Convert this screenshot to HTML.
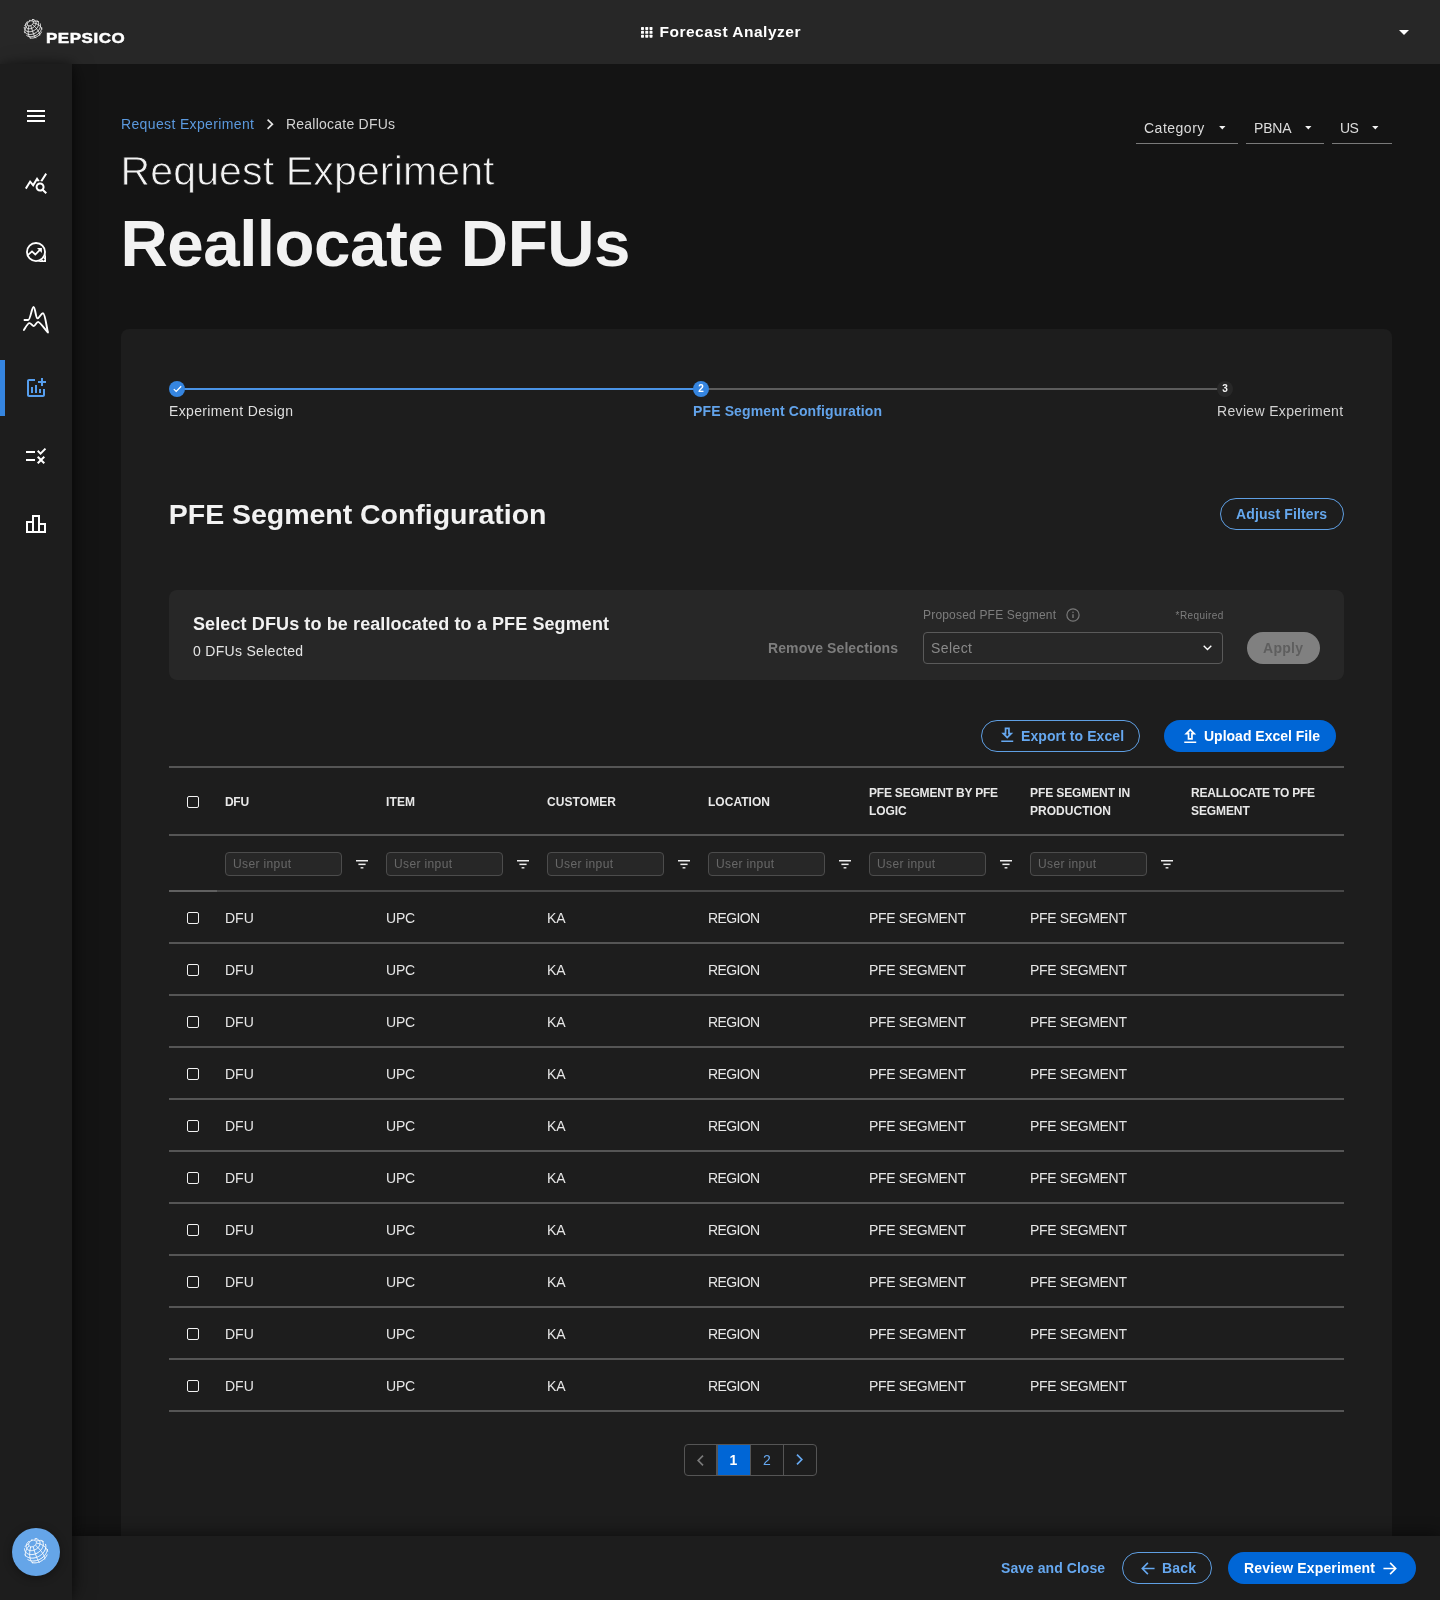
<!DOCTYPE html>
<html lang="en">
<head>
<meta charset="utf-8">
<title>Forecast Analyzer - Reallocate DFUs</title>
<style>
*{box-sizing:border-box;margin:0;padding:0}
html,body{width:1440px;height:1600px;overflow:hidden;background:#141414;color:#f2f2f2;
 font-family:"Liberation Sans",sans-serif}
.abs{position:absolute;white-space:nowrap}
#topbar{position:absolute;left:0;top:0;width:1440px;height:64px;background:#272727}
#sidebar{position:absolute;left:0;top:64px;width:72px;height:1536px;background:#1d1d1d;
 box-shadow:6px 0 22px -6px rgba(0,0,0,.55),0 0 10px rgba(0,0,0,.4)}
#main{position:absolute;left:72px;top:64px;width:1368px;height:1536px;background:#141414}
#card{position:absolute;left:121px;top:329px;width:1271px;height:1300px;background:#1d1d1d;border-radius:8px}
#footer{position:absolute;left:72px;top:1536px;width:1368px;height:64px;background:#1d1d1d;
 box-shadow:0 -3px 14px rgba(0,0,0,.45)}
#content,#footc,#sidec,#topc{position:absolute;left:0;top:0;width:1440px;height:1600px;will-change:transform;pointer-events:none}
svg{position:absolute;overflow:visible}
</style>
</head>
<body>
<div id="main"></div>
<div id="card"></div>
<div id="content">
<div class="abs" style="left:121px;top:114px;font-size:14px;line-height:20px;color:#5b99de;letter-spacing:0.36px;">Request Experiment</div>
<svg style="left:266.80px;top:118.90px" width="6.2" height="10.4" viewBox="0 0 6.2 10.4" fill="none" stroke="#e4e4e4" stroke-width="1.7"><path d="M0.600 0.600L5.40 5.20L0.600 9.80"/></svg>
<div class="abs" style="left:286px;top:114px;font-size:14px;line-height:20px;color:#d2d2d2;letter-spacing:0.23px;">Reallocate DFUs</div>
<div class="abs" style="left:120.5px;top:147px;font-size:41px;line-height:48px;color:#f2f2f2;letter-spacing:0.15px;-webkit-text-stroke:0.85px #141414;">Request Experiment</div>
<div class="abs" style="left:120.5px;top:208px;font-size:65.5px;line-height:72px;color:#f2f2f2;font-weight:700;letter-spacing:-0.5px;">Reallocate DFUs</div>
<div class="abs" style="left:1144px;top:118px;font-size:14px;line-height:20px;color:#dcdcdc;letter-spacing:0.5px;">Category</div>
<svg style="left:1218.5px;top:126.3px" width="6.600" height="3.600" viewBox="0 0 7 4"><path d="M0 0h7L3.500 4z" fill="#f2f2f2"/></svg>
<div class="abs" style="left:1136px;top:142.6px;width:102px;height:1px;background:#7a7a7a"></div>
<div class="abs" style="left:1254px;top:118px;font-size:14px;line-height:20px;color:#dcdcdc;letter-spacing:-0.2px;">PBNA</div>
<svg style="left:1304.5px;top:126.3px" width="6.600" height="3.600" viewBox="0 0 7 4"><path d="M0 0h7L3.500 4z" fill="#f2f2f2"/></svg>
<div class="abs" style="left:1246px;top:142.6px;width:78px;height:1px;background:#7a7a7a"></div>
<div class="abs" style="left:1340px;top:118px;font-size:14px;line-height:20px;color:#dcdcdc;letter-spacing:-0.6px;">US</div>
<svg style="left:1372.3px;top:126.3px" width="6.600" height="3.600" viewBox="0 0 7 4"><path d="M0 0h7L3.500 4z" fill="#f2f2f2"/></svg>
<div class="abs" style="left:1332px;top:142.6px;width:60px;height:1px;background:#7a7a7a"></div>
<div class="abs" style="left:177px;top:388px;width:524px;height:2px;background:#4a93e6"></div>
<div class="abs" style="left:701px;top:388px;width:517px;height:2px;background:#5c5c5c"></div>
<div class="abs" style="left:169px;top:381px;width:16px;height:16px;background:#3585e0;border-radius:50%"></div>
<svg style="left:172.5px;top:385px" width="9" height="8" viewBox="0 0 9 8" fill="none" stroke="#fff" stroke-width="1.25"><path d="M0.800 4.100L3.200 6.400L8.200 1.200"/></svg>
<div class="abs" style="left:693px;top:381px;width:16px;height:16px;background:#3585e0;border-radius:50%"></div>
<div class="abs" style="left:693px;top:381px;font-size:10px;line-height:16px;color:#fff;font-weight:700;width:16px;text-align:center;">2</div>
<div class="abs" style="left:1217px;top:381px;width:16px;height:16px;background:#282828;border-radius:50%"></div>
<div class="abs" style="left:1217px;top:381px;font-size:10px;line-height:16px;color:#f2f2f2;font-weight:700;width:16px;text-align:center;">3</div>
<div class="abs" style="left:169px;top:401px;font-size:14px;line-height:20px;color:#dedede;letter-spacing:0.36px;">Experiment Design</div>
<div class="abs" style="left:693px;top:401px;font-size:14px;line-height:20px;color:#62a3ea;font-weight:700;letter-spacing:0.13px;">PFE Segment Configuration</div>
<div class="abs" style="left:1217px;top:401px;font-size:14px;line-height:20px;color:#d2d2d2;letter-spacing:0.34px;">Review Experiment</div>
<div class="abs" style="left:168.8px;top:496px;font-size:28.5px;line-height:36px;color:#f2f2f2;font-weight:700;letter-spacing:-0.03px;">PFE Segment Configuration</div>
<div class="abs" style="left:1220px;top:498px;width:124px;height:32px;border:1px solid #5f9fe3;border-radius:16px"></div>
<div class="abs" style="left:1236px;top:504px;font-size:14px;line-height:20px;color:#66a8ee;font-weight:700;letter-spacing:0.12px;">Adjust Filters</div>
<div class="abs" style="left:169px;top:590px;width:1175px;height:90px;background:#272727;border-radius:8px"></div>
<div class="abs" style="left:193px;top:612px;font-size:18px;line-height:24px;color:#f2f2f2;font-weight:700;letter-spacing:0.11px;">Select DFUs to be reallocated to a PFE Segment</div>
<div class="abs" style="left:193px;top:641px;font-size:14px;line-height:20px;color:#e4e4e4;letter-spacing:0.3px;">0 DFUs Selected</div>
<div class="abs" style="left:768px;top:638px;font-size:14px;line-height:20px;color:#7d7d7d;font-weight:700;letter-spacing:0.1px;">Remove Selections</div>
<div class="abs" style="left:923px;top:607px;font-size:12px;line-height:16px;color:#7d7d7d;letter-spacing:0.19px;">Proposed PFE Segment</div>
<svg style="left:1066px;top:608px" width="14" height="14" viewBox="0 0 14 14" fill="none" stroke="#787878" stroke-width="1.2"><circle cx="7" cy="7" r="6.1"/><path d="M7 6.2v3.8" stroke-width="1.4"/><circle cx="7" cy="4.200" r="0.800" fill="#787878" stroke="none"/></svg>
<div class="abs" style="left:1175.6px;top:609px;font-size:10px;line-height:14px;color:#7d7d7d;letter-spacing:0.4px;">*Required</div>
<div class="abs" style="left:923px;top:632px;width:300px;height:32px;border:1px solid #5a5a5a;border-radius:4px"></div>
<div class="abs" style="left:931px;top:638px;font-size:14px;line-height:20px;color:#8a8a8a;letter-spacing:0.42px;">Select</div>
<svg style="left:1203px;top:645px" width="9" height="6" viewBox="0 0 9 6" fill="none" stroke="#fff" stroke-width="1.350"><path d="M0.7 0.8L4.5 4.6L8.3 0.8"/></svg>
<div class="abs" style="left:1247px;top:632px;width:73px;height:32px;background:#808080;border-radius:16px"></div>
<div class="abs" style="left:1263px;top:638px;font-size:14px;line-height:20px;color:#5e5e5e;font-weight:700;letter-spacing:0.28px;">Apply</div>
<div class="abs" style="left:981px;top:720px;width:159px;height:32px;border:1px solid #5f9fe3;border-radius:16px"></div>
<svg style="left:996.6px;top:725.4px" width="20.5" height="20.5" viewBox="0 0 24 24"><path d="M19 9h-4V3H9v6H5l7 7 7-7zm-8 2V5h2v6h1.17L12 13.17 9.83 11H11zm-6 7h14v2H5z" fill="#66a8f0"/></svg>
<div class="abs" style="left:1021px;top:726px;font-size:14px;line-height:20px;color:#66a8f0;font-weight:700;letter-spacing:0.08px;">Export to Excel</div>
<div class="abs" style="left:1164px;top:720px;width:172px;height:32px;background:#0066d6;border-radius:16px"></div>
<svg style="left:1179.7px;top:726.1px" width="20.5" height="20.5" viewBox="0 0 24 24"><path d="M9 16h6v-6h4l-7-7-7 7h4v6zm3-10.17L14.17 8H13v6h-2V8H9.83L12 5.83zM5 18h14v2H5z" fill="#fff"/></svg>
<div class="abs" style="left:1204px;top:726px;font-size:14px;line-height:20px;color:#ffffff;font-weight:700;">Upload Excel File</div>
<div class="abs" style="left:169px;top:766px;width:1175px;height:2px;background:#555555"></div>
<div class="abs" style="left:169px;top:834px;width:1175px;height:2px;background:#555555"></div>
<div class="abs" style="left:169px;top:890px;width:1175px;height:2px;background:#474747"></div>
<div class="abs" style="left:169px;top:890px;width:48px;height:2px;background:#606060"></div>
<div class="abs" style="left:169px;top:942px;width:1175px;height:2px;background:#555555"></div>
<div class="abs" style="left:169px;top:994px;width:1175px;height:2px;background:#555555"></div>
<div class="abs" style="left:169px;top:1046px;width:1175px;height:2px;background:#555555"></div>
<div class="abs" style="left:169px;top:1098px;width:1175px;height:2px;background:#555555"></div>
<div class="abs" style="left:169px;top:1150px;width:1175px;height:2px;background:#555555"></div>
<div class="abs" style="left:169px;top:1202px;width:1175px;height:2px;background:#555555"></div>
<div class="abs" style="left:169px;top:1254px;width:1175px;height:2px;background:#555555"></div>
<div class="abs" style="left:169px;top:1306px;width:1175px;height:2px;background:#555555"></div>
<div class="abs" style="left:169px;top:1358px;width:1175px;height:2px;background:#555555"></div>
<div class="abs" style="left:169px;top:1410px;width:1175px;height:2px;background:#555555"></div>
<div class="abs" style="left:186.75px;top:795.75px;width:12.5px;height:12.5px;border:1.25px solid #f2f2f2;border-radius:2px"></div>
<div class="abs" style="left:225px;top:793px;font-size:12px;line-height:18px;color:#e8e8e8;font-weight:700;letter-spacing:-0.3px;">DFU</div>
<div class="abs" style="left:386px;top:793px;font-size:12px;line-height:18px;color:#e8e8e8;font-weight:700;letter-spacing:0.15px;">ITEM</div>
<div class="abs" style="left:547px;top:793px;font-size:12px;line-height:18px;color:#e8e8e8;font-weight:700;letter-spacing:0.08px;">CUSTOMER</div>
<div class="abs" style="left:708px;top:793px;font-size:12px;line-height:18px;color:#e8e8e8;font-weight:700;letter-spacing:0.03px;">LOCATION</div>
<div class="abs" style="left:869px;top:784px;font-size:12px;line-height:18px;color:#e8e8e8;font-weight:700;letter-spacing:-0.2px;">PFE SEGMENT BY PFE</div>
<div class="abs" style="left:869px;top:802px;font-size:12px;line-height:18px;color:#e8e8e8;font-weight:700;letter-spacing:-0.1px;">LOGIC</div>
<div class="abs" style="left:1030px;top:784px;font-size:12px;line-height:18px;color:#e8e8e8;font-weight:700;letter-spacing:-0.1px;">PFE SEGMENT IN</div>
<div class="abs" style="left:1030px;top:802px;font-size:12px;line-height:18px;color:#e8e8e8;font-weight:700;letter-spacing:0.04px;">PRODUCTION</div>
<div class="abs" style="left:1191px;top:784px;font-size:12px;line-height:18px;color:#e8e8e8;font-weight:700;letter-spacing:-0.22px;">REALLOCATE TO PFE</div>
<div class="abs" style="left:1191px;top:802px;font-size:12px;line-height:18px;color:#e8e8e8;font-weight:700;letter-spacing:-0.1px;">SEGMENT</div>
<div class="abs" style="left:225px;top:852px;width:117px;height:24px;background:#272727;border:1px solid #4c4c4c;border-radius:4px"></div>
<div class="abs" style="left:233px;top:856px;font-size:12px;line-height:16px;color:#686868;letter-spacing:0.37px;">User input</div>
<svg style="left:356px;top:859.6px" width="12" height="9" viewBox="0 0 12 9" fill="#ededed"><rect x="0" y="0" width="12" height="1.5"/><rect x="2.4" y="3.6" width="7.2" height="1.5"/><rect x="4.6" y="7.1" width="2.8" height="1.4"/></svg>
<div class="abs" style="left:386px;top:852px;width:117px;height:24px;background:#272727;border:1px solid #4c4c4c;border-radius:4px"></div>
<div class="abs" style="left:394px;top:856px;font-size:12px;line-height:16px;color:#686868;letter-spacing:0.37px;">User input</div>
<svg style="left:517px;top:859.6px" width="12" height="9" viewBox="0 0 12 9" fill="#ededed"><rect x="0" y="0" width="12" height="1.5"/><rect x="2.4" y="3.6" width="7.2" height="1.5"/><rect x="4.6" y="7.1" width="2.8" height="1.4"/></svg>
<div class="abs" style="left:547px;top:852px;width:117px;height:24px;background:#272727;border:1px solid #4c4c4c;border-radius:4px"></div>
<div class="abs" style="left:555px;top:856px;font-size:12px;line-height:16px;color:#686868;letter-spacing:0.37px;">User input</div>
<svg style="left:678px;top:859.6px" width="12" height="9" viewBox="0 0 12 9" fill="#ededed"><rect x="0" y="0" width="12" height="1.5"/><rect x="2.4" y="3.6" width="7.2" height="1.5"/><rect x="4.6" y="7.1" width="2.8" height="1.4"/></svg>
<div class="abs" style="left:708px;top:852px;width:117px;height:24px;background:#272727;border:1px solid #4c4c4c;border-radius:4px"></div>
<div class="abs" style="left:716px;top:856px;font-size:12px;line-height:16px;color:#686868;letter-spacing:0.37px;">User input</div>
<svg style="left:839px;top:859.6px" width="12" height="9" viewBox="0 0 12 9" fill="#ededed"><rect x="0" y="0" width="12" height="1.5"/><rect x="2.4" y="3.6" width="7.2" height="1.5"/><rect x="4.6" y="7.1" width="2.8" height="1.4"/></svg>
<div class="abs" style="left:869px;top:852px;width:117px;height:24px;background:#272727;border:1px solid #4c4c4c;border-radius:4px"></div>
<div class="abs" style="left:877px;top:856px;font-size:12px;line-height:16px;color:#686868;letter-spacing:0.37px;">User input</div>
<svg style="left:1000px;top:859.6px" width="12" height="9" viewBox="0 0 12 9" fill="#ededed"><rect x="0" y="0" width="12" height="1.5"/><rect x="2.4" y="3.6" width="7.2" height="1.5"/><rect x="4.6" y="7.1" width="2.8" height="1.4"/></svg>
<div class="abs" style="left:1030px;top:852px;width:117px;height:24px;background:#272727;border:1px solid #4c4c4c;border-radius:4px"></div>
<div class="abs" style="left:1038px;top:856px;font-size:12px;line-height:16px;color:#686868;letter-spacing:0.37px;">User input</div>
<svg style="left:1161px;top:859.6px" width="12" height="9" viewBox="0 0 12 9" fill="#ededed"><rect x="0" y="0" width="12" height="1.5"/><rect x="2.4" y="3.6" width="7.2" height="1.5"/><rect x="4.6" y="7.1" width="2.8" height="1.4"/></svg>
<div class="abs" style="left:186.75px;top:911.95px;width:12.5px;height:12.5px;border:1.25px solid #f2f2f2;border-radius:2px"></div>
<div class="abs" style="left:225px;top:908px;font-size:14px;line-height:20px;color:#e6e6e6;">DFU</div>
<div class="abs" style="left:386px;top:908px;font-size:14px;line-height:20px;color:#e6e6e6;letter-spacing:-0.2px;">UPC</div>
<div class="abs" style="left:547px;top:908px;font-size:14px;line-height:20px;color:#e6e6e6;letter-spacing:-0.2px;">KA</div>
<div class="abs" style="left:708px;top:908px;font-size:14px;line-height:20px;color:#e6e6e6;letter-spacing:-0.6px;">REGION</div>
<div class="abs" style="left:869px;top:908px;font-size:14px;line-height:20px;color:#e6e6e6;letter-spacing:-0.34px;">PFE SEGMENT</div>
<div class="abs" style="left:1030px;top:908px;font-size:14px;line-height:20px;color:#e6e6e6;letter-spacing:-0.34px;">PFE SEGMENT</div>
<div class="abs" style="left:186.75px;top:963.95px;width:12.5px;height:12.5px;border:1.25px solid #f2f2f2;border-radius:2px"></div>
<div class="abs" style="left:225px;top:960px;font-size:14px;line-height:20px;color:#e6e6e6;">DFU</div>
<div class="abs" style="left:386px;top:960px;font-size:14px;line-height:20px;color:#e6e6e6;letter-spacing:-0.2px;">UPC</div>
<div class="abs" style="left:547px;top:960px;font-size:14px;line-height:20px;color:#e6e6e6;letter-spacing:-0.2px;">KA</div>
<div class="abs" style="left:708px;top:960px;font-size:14px;line-height:20px;color:#e6e6e6;letter-spacing:-0.6px;">REGION</div>
<div class="abs" style="left:869px;top:960px;font-size:14px;line-height:20px;color:#e6e6e6;letter-spacing:-0.34px;">PFE SEGMENT</div>
<div class="abs" style="left:1030px;top:960px;font-size:14px;line-height:20px;color:#e6e6e6;letter-spacing:-0.34px;">PFE SEGMENT</div>
<div class="abs" style="left:186.75px;top:1015.95px;width:12.5px;height:12.5px;border:1.25px solid #f2f2f2;border-radius:2px"></div>
<div class="abs" style="left:225px;top:1012px;font-size:14px;line-height:20px;color:#e6e6e6;">DFU</div>
<div class="abs" style="left:386px;top:1012px;font-size:14px;line-height:20px;color:#e6e6e6;letter-spacing:-0.2px;">UPC</div>
<div class="abs" style="left:547px;top:1012px;font-size:14px;line-height:20px;color:#e6e6e6;letter-spacing:-0.2px;">KA</div>
<div class="abs" style="left:708px;top:1012px;font-size:14px;line-height:20px;color:#e6e6e6;letter-spacing:-0.6px;">REGION</div>
<div class="abs" style="left:869px;top:1012px;font-size:14px;line-height:20px;color:#e6e6e6;letter-spacing:-0.34px;">PFE SEGMENT</div>
<div class="abs" style="left:1030px;top:1012px;font-size:14px;line-height:20px;color:#e6e6e6;letter-spacing:-0.34px;">PFE SEGMENT</div>
<div class="abs" style="left:186.75px;top:1067.95px;width:12.5px;height:12.5px;border:1.25px solid #f2f2f2;border-radius:2px"></div>
<div class="abs" style="left:225px;top:1064px;font-size:14px;line-height:20px;color:#e6e6e6;">DFU</div>
<div class="abs" style="left:386px;top:1064px;font-size:14px;line-height:20px;color:#e6e6e6;letter-spacing:-0.2px;">UPC</div>
<div class="abs" style="left:547px;top:1064px;font-size:14px;line-height:20px;color:#e6e6e6;letter-spacing:-0.2px;">KA</div>
<div class="abs" style="left:708px;top:1064px;font-size:14px;line-height:20px;color:#e6e6e6;letter-spacing:-0.6px;">REGION</div>
<div class="abs" style="left:869px;top:1064px;font-size:14px;line-height:20px;color:#e6e6e6;letter-spacing:-0.34px;">PFE SEGMENT</div>
<div class="abs" style="left:1030px;top:1064px;font-size:14px;line-height:20px;color:#e6e6e6;letter-spacing:-0.34px;">PFE SEGMENT</div>
<div class="abs" style="left:186.75px;top:1119.95px;width:12.5px;height:12.5px;border:1.25px solid #f2f2f2;border-radius:2px"></div>
<div class="abs" style="left:225px;top:1116px;font-size:14px;line-height:20px;color:#e6e6e6;">DFU</div>
<div class="abs" style="left:386px;top:1116px;font-size:14px;line-height:20px;color:#e6e6e6;letter-spacing:-0.2px;">UPC</div>
<div class="abs" style="left:547px;top:1116px;font-size:14px;line-height:20px;color:#e6e6e6;letter-spacing:-0.2px;">KA</div>
<div class="abs" style="left:708px;top:1116px;font-size:14px;line-height:20px;color:#e6e6e6;letter-spacing:-0.6px;">REGION</div>
<div class="abs" style="left:869px;top:1116px;font-size:14px;line-height:20px;color:#e6e6e6;letter-spacing:-0.34px;">PFE SEGMENT</div>
<div class="abs" style="left:1030px;top:1116px;font-size:14px;line-height:20px;color:#e6e6e6;letter-spacing:-0.34px;">PFE SEGMENT</div>
<div class="abs" style="left:186.75px;top:1171.95px;width:12.5px;height:12.5px;border:1.25px solid #f2f2f2;border-radius:2px"></div>
<div class="abs" style="left:225px;top:1168px;font-size:14px;line-height:20px;color:#e6e6e6;">DFU</div>
<div class="abs" style="left:386px;top:1168px;font-size:14px;line-height:20px;color:#e6e6e6;letter-spacing:-0.2px;">UPC</div>
<div class="abs" style="left:547px;top:1168px;font-size:14px;line-height:20px;color:#e6e6e6;letter-spacing:-0.2px;">KA</div>
<div class="abs" style="left:708px;top:1168px;font-size:14px;line-height:20px;color:#e6e6e6;letter-spacing:-0.6px;">REGION</div>
<div class="abs" style="left:869px;top:1168px;font-size:14px;line-height:20px;color:#e6e6e6;letter-spacing:-0.34px;">PFE SEGMENT</div>
<div class="abs" style="left:1030px;top:1168px;font-size:14px;line-height:20px;color:#e6e6e6;letter-spacing:-0.34px;">PFE SEGMENT</div>
<div class="abs" style="left:186.75px;top:1223.95px;width:12.5px;height:12.5px;border:1.25px solid #f2f2f2;border-radius:2px"></div>
<div class="abs" style="left:225px;top:1220px;font-size:14px;line-height:20px;color:#e6e6e6;">DFU</div>
<div class="abs" style="left:386px;top:1220px;font-size:14px;line-height:20px;color:#e6e6e6;letter-spacing:-0.2px;">UPC</div>
<div class="abs" style="left:547px;top:1220px;font-size:14px;line-height:20px;color:#e6e6e6;letter-spacing:-0.2px;">KA</div>
<div class="abs" style="left:708px;top:1220px;font-size:14px;line-height:20px;color:#e6e6e6;letter-spacing:-0.6px;">REGION</div>
<div class="abs" style="left:869px;top:1220px;font-size:14px;line-height:20px;color:#e6e6e6;letter-spacing:-0.34px;">PFE SEGMENT</div>
<div class="abs" style="left:1030px;top:1220px;font-size:14px;line-height:20px;color:#e6e6e6;letter-spacing:-0.34px;">PFE SEGMENT</div>
<div class="abs" style="left:186.75px;top:1275.95px;width:12.5px;height:12.5px;border:1.25px solid #f2f2f2;border-radius:2px"></div>
<div class="abs" style="left:225px;top:1272px;font-size:14px;line-height:20px;color:#e6e6e6;">DFU</div>
<div class="abs" style="left:386px;top:1272px;font-size:14px;line-height:20px;color:#e6e6e6;letter-spacing:-0.2px;">UPC</div>
<div class="abs" style="left:547px;top:1272px;font-size:14px;line-height:20px;color:#e6e6e6;letter-spacing:-0.2px;">KA</div>
<div class="abs" style="left:708px;top:1272px;font-size:14px;line-height:20px;color:#e6e6e6;letter-spacing:-0.6px;">REGION</div>
<div class="abs" style="left:869px;top:1272px;font-size:14px;line-height:20px;color:#e6e6e6;letter-spacing:-0.34px;">PFE SEGMENT</div>
<div class="abs" style="left:1030px;top:1272px;font-size:14px;line-height:20px;color:#e6e6e6;letter-spacing:-0.34px;">PFE SEGMENT</div>
<div class="abs" style="left:186.75px;top:1327.95px;width:12.5px;height:12.5px;border:1.25px solid #f2f2f2;border-radius:2px"></div>
<div class="abs" style="left:225px;top:1324px;font-size:14px;line-height:20px;color:#e6e6e6;">DFU</div>
<div class="abs" style="left:386px;top:1324px;font-size:14px;line-height:20px;color:#e6e6e6;letter-spacing:-0.2px;">UPC</div>
<div class="abs" style="left:547px;top:1324px;font-size:14px;line-height:20px;color:#e6e6e6;letter-spacing:-0.2px;">KA</div>
<div class="abs" style="left:708px;top:1324px;font-size:14px;line-height:20px;color:#e6e6e6;letter-spacing:-0.6px;">REGION</div>
<div class="abs" style="left:869px;top:1324px;font-size:14px;line-height:20px;color:#e6e6e6;letter-spacing:-0.34px;">PFE SEGMENT</div>
<div class="abs" style="left:1030px;top:1324px;font-size:14px;line-height:20px;color:#e6e6e6;letter-spacing:-0.34px;">PFE SEGMENT</div>
<div class="abs" style="left:186.75px;top:1379.95px;width:12.5px;height:12.5px;border:1.25px solid #f2f2f2;border-radius:2px"></div>
<div class="abs" style="left:225px;top:1376px;font-size:14px;line-height:20px;color:#e6e6e6;">DFU</div>
<div class="abs" style="left:386px;top:1376px;font-size:14px;line-height:20px;color:#e6e6e6;letter-spacing:-0.2px;">UPC</div>
<div class="abs" style="left:547px;top:1376px;font-size:14px;line-height:20px;color:#e6e6e6;letter-spacing:-0.2px;">KA</div>
<div class="abs" style="left:708px;top:1376px;font-size:14px;line-height:20px;color:#e6e6e6;letter-spacing:-0.6px;">REGION</div>
<div class="abs" style="left:869px;top:1376px;font-size:14px;line-height:20px;color:#e6e6e6;letter-spacing:-0.34px;">PFE SEGMENT</div>
<div class="abs" style="left:1030px;top:1376px;font-size:14px;line-height:20px;color:#e6e6e6;letter-spacing:-0.34px;">PFE SEGMENT</div>
<div class="abs" style="left:684px;top:1444px;width:133px;height:32px;border:1px solid #555;border-radius:4px"></div>
<div class="abs" style="left:717px;top:1445px;width:33px;height:30px;background:#0066d6"></div>
<div class="abs" style="left:716.4px;top:1445px;width:1.2px;height:30px;background:#555"></div>
<div class="abs" style="left:749.6px;top:1445px;width:1.2px;height:30px;background:#555"></div>
<div class="abs" style="left:783px;top:1445px;width:1.2px;height:30px;background:#555"></div>
<svg style="left:697px;top:1454.5px" width="7" height="11" viewBox="0 0 7 11" fill="none" stroke="#7a7a7a" stroke-width="1.7"><path d="M6 0.7L1.2 5.5L6 10.3"/></svg>
<div class="abs" style="left:716.8px;top:1450px;font-size:14px;line-height:20px;color:#fff;font-weight:700;width:33px;text-align:center;">1</div>
<div class="abs" style="left:750.5px;top:1450px;font-size:14px;line-height:20px;color:#66a8f0;width:33px;text-align:center;">2</div>
<svg style="left:796.3px;top:1454.2px" width="7" height="11" viewBox="0 0 7 11" fill="none" stroke="#66a8f0" stroke-width="1.7"><path d="M1 0.7L5.8 5.5L1 10.3"/></svg>
</div>
<div id="footer"></div>
<div id="footc">
<div class="abs" style="left:1001px;top:1558px;font-size:14px;line-height:20px;color:#66a8f0;font-weight:700;letter-spacing:0.04px;">Save and Close</div>
<div class="abs" style="left:1122px;top:1552px;width:90px;height:32px;border:1px solid #5f9fe3;border-radius:16px"></div>
<svg style="left:1141px;top:1561.500px" width="14" height="13" viewBox="0 0 13 12" fill="none" stroke="#66a8f0" stroke-width="1.500"><path d="M12.600 6H1.400M6.400 0.800L1.200 6L6.400 11.200"/></svg>
<div class="abs" style="left:1162px;top:1558px;font-size:14px;line-height:20px;color:#66a8f0;font-weight:700;letter-spacing:0.18px;">Back</div>
<div class="abs" style="left:1228px;top:1552px;width:188px;height:32px;background:#0066d6;border-radius:16px"></div>
<div class="abs" style="left:1244px;top:1558px;font-size:14px;line-height:20px;color:#fff;font-weight:700;letter-spacing:0.16px;">Review Experiment</div>
<svg style="left:1383.1px;top:1561.500px" width="14" height="13" viewBox="0 0 13 12" fill="none" stroke="#fff" stroke-width="1.500"><path d="M0.400 6H11.600M6.600 0.8L11.800 6L6.600 11.200"/></svg>
</div>
<div id="topbar"></div>
<div id="topc">
<svg style="left:33px;top:29.2px" width="1" height="1" viewBox="0 0 1 1" fill="none" stroke="#f6f6f6" stroke-width="0.95" stroke-linecap="round" stroke-linejoin="round"><path d="M-3.62 -7.86L-3.90 -7.69L-4.18 -7.51L-4.43 -7.31L-4.67 -7.09L-4.88 -6.85L-5.08 -6.61L-5.24 -6.35L-5.38 -6.09L-5.48 -5.82L-5.56 -5.56L-5.60 -5.29L-5.61 -5.03L-5.59 -4.78L-5.53 -4.54L-5.45 -4.31L-5.33 -4.10L-5.19 -3.91L-5.01 -3.74L-4.81 -3.59L-4.59 -3.46L-4.35 -3.36L-4.08 -3.28L-3.81 -3.23L-3.51 -3.21L-3.21 -3.22L-2.91 -3.26L-2.60 -3.32L-2.29 -3.41L-1.98 -3.52L-1.69 -3.66L-1.40 -3.83L-1.13 -4.01L-0.87 -4.21L-0.63 -4.43L-0.42 -4.67L-0.23 -4.91L-0.06 -5.17L0.07 -5.43L0.18 -5.70L0.25 -5.96L0.30 -6.23L0.31 -6.49L0.29 -6.74L0.23 -6.98L0.15 -7.21L0.03 -7.42L-0.11 -7.61L-0.29 -7.78L-0.49 -7.93L-0.71 -8.06L-0.95 -8.16L-1.22 -8.24L-1.50 -8.29L-1.79 -8.31L-2.09 -8.30L-2.39 -8.26L-2.70 -8.20L-3.01 -8.11L-3.32 -8.00L-3.62 -7.86M-6.59 -6.35L-6.88 -5.89L-7.13 -5.42L-7.32 -4.94L-7.45 -4.46L-7.53 -3.99L-7.55 -3.52L-7.51 -3.07L-7.41 -2.64L-7.26 -2.23L-7.05 -1.85L-6.79 -1.50L-6.48 -1.19L-6.12 -0.92L-5.72 -0.69L-5.28 -0.51L-4.80 -0.37L-4.30 -0.28L-3.78 -0.25L-3.24 -0.26L-2.68 -0.32L-2.13 -0.44L-1.57 -0.60L-1.02 -0.81L-0.49 -1.06L0.03 -1.35L0.52 -1.68L0.98 -2.05L1.41 -2.44L1.80 -2.86L2.14 -3.31L2.44 -3.77L2.68 -4.24L2.87 -4.72L3.01 -5.20L3.08 -5.67L3.10 -6.14L3.06 -6.59L2.97 -7.03L2.81 -7.43L2.60 -7.81L2.34 -8.16L2.03 -8.47L1.67 -8.74L1.27 -8.97L0.83 -9.16L0.36 -9.29L-0.14 -9.38L-0.67 -9.41M-8.75 -1.66L-8.70 -1.06L-8.57 -0.47L-8.36 0.08L-8.08 0.59L-7.72 1.06L-7.30 1.48L-6.82 1.84L-6.28 2.15L-5.69 2.40L-5.05 2.58L-4.38 2.69L-3.67 2.74L-2.94 2.73L-2.20 2.64L-1.45 2.49L-0.70 2.27L0.04 1.99L0.76 1.65L1.46 1.26L2.12 0.81L2.74 0.32L3.32 -0.21L3.84 -0.78L4.30 -1.38L4.70 -2.00L5.03 -2.63L5.28 -3.28L5.46 -3.92L5.57 -4.56L5.59 -5.19L5.54 -5.80L5.41 -6.38L5.20 -6.93L4.92 -7.45L4.57 -7.91L4.15 -8.33M-8.31 2.97L-7.90 3.51L-7.42 4.00L-6.86 4.42L-6.23 4.78L-5.54 5.06L-4.81 5.27L-4.02 5.41L-3.21 5.47L-2.36 5.45L-1.50 5.35L-0.63 5.17L0.24 4.92L1.10 4.60L1.93 4.20L2.74 3.75L3.51 3.23L4.23 2.66L4.90 2.04L5.50 1.38L6.04 0.69L6.50 -0.03L6.88 -0.77L7.18 -1.51L7.39 -2.26L7.51 -3.01L7.54 -3.73L7.48 -4.44L7.33 -5.12M-6.22 6.57L-5.57 6.94L-4.86 7.23L-4.09 7.45L-3.28 7.59L-2.43 7.65L-1.55 7.63L-0.65 7.53L0.25 7.35L1.16 7.09L2.05 6.75L2.92 6.34L3.76 5.87L4.56 5.33L5.31 4.73L6.00 4.09L6.63 3.41L7.18 2.69L7.66 1.94L8.06 1.17L8.37 0.40L8.59 -0.38L8.71 -1.15M-2.97 8.90L-2.21 9.04L-1.41 9.09L-0.58 9.07L0.26 8.98L1.11 8.80L1.96 8.56L2.80 8.24L3.62 7.86L4.40 7.41L5.16 6.91L5.86 6.35L6.51 5.74L7.10 5.10L7.63 4.42L8.08 3.72L8.45 3.00M6.72 6.17L6.74 5.90L6.73 5.61L6.68 5.29L6.60 4.94L6.49 4.57L6.34 4.18L6.17 3.76L5.96 3.33L5.73 2.88L5.47 2.42L5.18 1.95L4.87 1.46L4.53 0.97L4.17 0.47L3.79 -0.02L3.40 -0.52L2.98 -1.02L2.55 -1.51L2.11 -1.99L1.66 -2.46L1.20 -2.92L0.73 -3.37L0.27 -3.80L-0.20 -4.21M8.88 0.11L8.76 -0.32L8.59 -0.75L8.39 -1.18L8.14 -1.60L7.85 -2.01L7.52 -2.41L7.16 -2.80L6.76 -3.18L6.33 -3.55L5.87 -3.89L5.38 -4.22L4.87 -4.52L4.33 -4.81L3.77 -5.07L3.19 -5.30L2.59 -5.51L1.98 -5.70L1.37 -5.85L0.74 -5.98M5.59 -7.27L5.15 -7.48L4.70 -7.65L4.21 -7.78L3.71 -7.87L3.19 -7.92L2.66 -7.94L2.11 -7.91L1.55 -7.85L0.99 -7.75L0.41 -7.61M0.28 -9.36L-0.06 -9.21L-0.40 -9.01L-0.73 -8.78L-1.06 -8.50M-3.12 -8.74L-3.13 -8.54L-3.13 -8.29M-5.82 -7.12L-5.57 -7.14L-5.29 -7.12L-4.99 -7.07M-8.17 -3.56L-7.89 -3.90L-7.57 -4.23L-7.21 -4.53L-6.82 -4.81L-6.39 -5.07L-5.94 -5.31M-8.10 3.78L-8.17 3.28L-8.21 2.77L-8.20 2.24L-8.15 1.71L-8.06 1.16L-7.93 0.61L-7.76 0.06L-7.56 -0.49L-7.32 -1.05L-7.04 -1.59L-6.73 -2.13L-6.39 -2.66L-6.01 -3.17L-5.61 -3.67M-2.65 9.01L-2.93 8.77L-3.19 8.49L-3.43 8.17L-3.66 7.81L-3.87 7.41L-4.07 6.97L-4.24 6.50L-4.39 6.00L-4.52 5.46L-4.63 4.91L-4.71 4.32L-4.78 3.72L-4.82 3.10L-4.83 2.46L-4.82 1.82L-4.79 1.16L-4.74 0.50L-4.66 -0.17L-4.56 -0.83L-4.44 -1.49L-4.29 -2.15L-4.13 -2.79M2.55 8.89L2.42 8.73L2.28 8.52L2.12 8.27L1.96 7.98L1.78 7.65L1.60 7.28L1.41 6.88L1.21 6.44L1.00 5.97L0.79 5.48L0.58 4.95L0.37 4.41L0.15 3.84L-0.07 3.25L-0.29 2.65L-0.51 2.03L-0.72 1.40L-0.93 0.77L-1.14 0.13L-1.34 -0.50L-1.53 -1.14L-1.72 -1.77L-1.90 -2.39L-2.07 -3.00"/></svg>
<div class="abs" style="left:45.6px;top:30px;font-size:15px;line-height:18px;color:#ffffff;font-weight:700;letter-spacing:0.5px;transform:translateY(-0.8px) scaleX(1.13);transform-origin:left center;-webkit-text-stroke:0.5px #fff;">PEPSICO</div>
<svg style="left:641.3px;top:26.6px" width="12" height="12" fill="#fff"><rect x="0.00" y="0.00" width="2.95" height="2.95" rx="0.6"/><rect x="4.27" y="0.00" width="2.95" height="2.95" rx="0.6"/><rect x="8.54" y="0.00" width="2.95" height="2.95" rx="0.6"/><rect x="0.00" y="3.85" width="2.95" height="2.95" rx="0.6"/><rect x="4.27" y="3.85" width="2.95" height="2.95" rx="0.6"/><rect x="8.54" y="3.85" width="2.95" height="2.95" rx="0.6"/><rect x="0.00" y="7.70" width="2.95" height="2.95" rx="0.6"/><rect x="4.27" y="7.70" width="2.95" height="2.95" rx="0.6"/><rect x="8.54" y="7.70" width="2.95" height="2.95" rx="0.6"/></svg>
<div class="abs" style="left:659.5px;top:20px;font-size:15.5px;line-height:24px;color:#ffffff;font-weight:700;letter-spacing:0.5px;">Forecast Analyzer</div>
<svg style="left:1398.5px;top:29.5px" width="10" height="5" viewBox="0 0 10 5"><path d="M0 0h10L5 5z" fill="#fff"/></svg>
</div>
<div id="sidebar"></div>
<div id="sidec">
<svg style="left:24px;top:104px" width="24" height="24" viewBox="0 0 24 24"><path d="M3 18h18v-2H3v2zm0-5h18v-2H3v2zm0-7v2h18V6H3z" fill="#fff"/></svg>
<svg style="left:24px;top:170.9px" width="24" height="24" viewBox="0 0 24 24"><path d="M19.88 18.47c.44-.7.7-1.51.7-2.39 0-2.49-2.01-4.5-4.5-4.5s-4.5 2.01-4.5 4.5 2.01 4.5 4.49 4.5c.88 0 1.7-.26 2.39-.7L21.58 23 23 21.58l-3.12-3.11zm-3.8.11c-1.38 0-2.5-1.12-2.5-2.5s1.12-2.5 2.5-2.5 2.5 1.12 2.5 2.5-1.12 2.5-2.5 2.5zm-.36-8.5c-.74.02-1.45.18-2.1.45l-.55-.83-3.8 6.18-3.01-3.52-3.63 5.81L1 17l5-8 3 3.5L13 6l2.72 4.08zm2.59.5c-.64-.28-1.33-.45-2.05-.49L21.38 2 23 3.18l-4.69 7.4z" fill="#fff"/></svg>
<svg style="left:24px;top:240px" width="24" height="24" viewBox="0 0 24 24" fill="none" stroke="#fff" stroke-width="1.850"><circle cx="12" cy="12" r="9.050"/><path d="M22 12.500V22H12.500A10 10 0 0 0 22 12.500Z" fill="#fff" stroke="none"/><path d="M19.500 18.300l1.200 1.200-1.200 1.200-1.200-1.200z" fill="#1d1d1d" stroke="none"/><path d="M3.800 15.200l4.200-3.800 3.300 3.100 4.600-4.600" stroke-width="1.750"/><path d="M13 8h4.900v4.900z" fill="#fff" stroke="none"/></svg>
<svg style="left:20px;top:304px" width="32" height="32" viewBox="0 0 32 32" fill="none" stroke="#fff" stroke-width="1.9" stroke-linejoin="round" stroke-linecap="butt"><path d="M3.750 16H8.200C10.400 16 11.800 3 13.500 3S15.800 14.400 17.500 14.400S21 9.200 23 9.200S26.400 22 27.900 28.500"/><path d="M3.900 26C5.500 23.500 7.600 19.100 9.400 19.100S12.200 22.100 13.750 22.100S16.400 17.900 18.100 17.900S24 24 27.900 28.500" stroke-linecap="round"/></svg>
<div class="abs" style="left:0px;top:360px;width:5px;height:56px;background:#3585e0"></div>
<svg style="left:24px;top:376px" width="24" height="24" viewBox="0 0 24 24"><path d="M22 5v2h-3v3h-2V7h-3V5h3V2h2v3h3zm-3 14H5V5h6V3H5c-1.1 0-2 .9-2 2v14c0 1.1.9 2 2 2h14c1.1 0 2-.9 2-2v-6h-2v6zm-4-6v4h2v-4h-2zm-4 4h2V9h-2v8zm-2 0v-6H7v6h2z" fill="#569eee"/></svg>
<svg style="left:24px;top:444px" width="24" height="24" viewBox="0 0 24 24"><path d="M16.54 11L13 7.46l1.41-1.41 2.12 2.12 4.24-4.24 1.41 1.41L16.54 11zM11 7H2v2h9V7zm10 6.41L19.59 12 17 14.59 14.41 12 13 13.41 15.59 16 13 18.590 14.41 20 17 17.41 19.59 20 21 18.59 18.41 16 21 13.41zM11 15H2v2h9v-2z" fill="#fff"/></svg>
<svg style="left:24px;top:512px" width="24" height="24" viewBox="0 0 24 24"><path d="M16 11V3H8v6H2v12h20V11h-6zm-6-6h4v14h-4V5zm-6 6h4v8H4v-8zm16 8h-4v-6h4v6z" fill="#fff"/></svg>
<div class="abs" style="left:12px;top:1528px;width:48px;height:48px;background:#65a5e8;border-radius:50%;box-shadow:0 2px 8px rgba(0,0,0,.35)"></div>
<svg style="left:35.5px;top:1551.3px" width="1" height="1" viewBox="0 0 1 1" fill="none" stroke="#fff" stroke-width="1.0" stroke-linecap="round" stroke-linejoin="round"><path d="M-4.73 -10.28L-5.10 -10.06L-5.46 -9.82L-5.80 -9.56L-6.11 -9.27L-6.39 -8.96L-6.64 -8.64L-6.85 -8.31L-7.03 -7.96L-7.17 -7.61L-7.27 -7.27L-7.32 -6.92L-7.34 -6.58L-7.31 -6.25L-7.24 -5.94L-7.12 -5.64L-6.97 -5.37L-6.78 -5.11L-6.56 -4.89L-6.29 -4.69L-6.00 -4.52L-5.68 -4.39L-5.34 -4.29L-4.98 -4.23L-4.60 -4.20L-4.20 -4.21L-3.80 -4.26L-3.40 -4.34L-2.99 -4.46L-2.59 -4.61L-2.20 -4.79L-1.83 -5.00L-1.47 -5.24L-1.14 -5.51L-0.83 -5.80L-0.54 -6.10L-0.30 -6.43L-0.08 -6.76L0.10 -7.10L0.23 -7.45L0.33 -7.80L0.39 -8.15L0.40 -8.48L0.37 -8.81L0.30 -9.13L0.19 -9.42L0.04 -9.70L-0.15 -9.95L-0.38 -10.18L-0.64 -10.38L-0.93 -10.54L-1.25 -10.67L-1.59 -10.77L-1.96 -10.84L-2.34 -10.86L-2.73 -10.85L-3.13 -10.81L-3.54 -10.73L-3.94 -10.61L-4.34 -10.46L-4.73 -10.28M-8.61 -8.31L-9.00 -7.71L-9.32 -7.09L-9.57 -6.46L-9.74 -5.84L-9.85 -5.21L-9.87 -4.60L-9.82 -4.01L-9.69 -3.45L-9.49 -2.91L-9.22 -2.42L-8.88 -1.96L-8.47 -1.55L-8.00 -1.20L-7.47 -0.90L-6.90 -0.66L-6.28 -0.48L-5.63 -0.37L-4.94 -0.32L-4.23 -0.34L-3.51 -0.42L-2.78 -0.57L-2.05 -0.78L-1.34 -1.05L-0.64 -1.38L0.04 -1.76L0.68 -2.20L1.29 -2.68L1.85 -3.19L2.35 -3.75L2.80 -4.33L3.19 -4.93L3.51 -5.54L3.76 -6.17L3.93 -6.80L4.03 -7.42L4.06 -8.03L4.01 -8.62L3.88 -9.19L3.68 -9.72L3.40 -10.22L3.06 -10.67L2.65 -11.08L2.19 -11.43L1.66 -11.73L1.09 -11.97L0.47 -12.15L-0.19 -12.26L-0.87 -12.31M-11.44 -2.18L-11.37 -1.38L-11.20 -0.62L-10.93 0.10L-10.56 0.77L-10.10 1.38L-9.55 1.93L-8.92 2.41L-8.21 2.81L-7.44 3.13L-6.61 3.37L-5.72 3.52L-4.80 3.59L-3.85 3.56L-2.88 3.45L-1.89 3.25L-0.92 2.97L0.05 2.61L1.00 2.16L1.91 1.65L2.77 1.06L3.59 0.42L4.34 -0.28L5.02 -1.02L5.62 -1.80L6.14 -2.61L6.57 -3.44L6.91 -4.29L7.15 -5.13L7.28 -5.97L7.32 -6.79L7.25 -7.59L7.08 -8.35L6.80 -9.07L6.44 -9.74L5.97 -10.35L5.43 -10.90M-10.87 3.88L-10.34 4.59L-9.70 5.23L-8.97 5.78L-8.15 6.25L-7.25 6.62L-6.28 6.90L-5.26 7.07L-4.19 7.15L-3.09 7.12L-1.96 6.99L-0.82 6.76L0.31 6.43L1.43 6.01L2.53 5.50L3.58 4.90L4.59 4.22L5.53 3.48L6.40 2.67L7.19 1.81L7.90 0.90L8.50 -0.04L9.00 -1.00L9.39 -1.98L9.66 -2.96L9.82 -3.93L9.86 -4.88L9.78 -5.81L9.58 -6.69M-8.14 8.59L-7.29 9.07L-6.35 9.46L-5.35 9.75L-4.28 9.93L-3.17 10.01L-2.02 9.98L-0.85 9.85L0.33 9.61L1.51 9.27L2.68 8.83L3.82 8.29L4.91 7.67L5.96 6.97L6.94 6.19L7.84 5.35L8.67 4.46L9.39 3.51L10.02 2.54L10.54 1.53L10.94 0.52L11.23 -0.50L11.39 -1.51M-3.89 11.64L-2.89 11.82L-1.84 11.89L-0.76 11.86L0.34 11.74L1.45 11.51L2.56 11.19L3.66 10.78L4.73 10.28L5.76 9.69L6.74 9.03L7.66 8.30L8.52 7.51L9.29 6.67L9.97 5.78L10.56 4.86L11.05 3.92M8.79 8.07L8.81 7.72L8.79 7.34L8.73 6.92L8.63 6.46L8.48 5.98L8.30 5.46L8.07 4.92L7.80 4.36L7.49 3.77L7.15 3.16L6.78 2.54L6.37 1.91L5.93 1.27L5.46 0.62L4.96 -0.03L4.44 -0.68L3.90 -1.33L3.34 -1.97L2.76 -2.60L2.17 -3.22L1.57 -3.82L0.96 -4.41L0.35 -4.97L-0.27 -5.51M11.61 0.15L11.45 -0.42L11.24 -0.98L10.97 -1.54L10.64 -2.09L10.27 -2.63L9.84 -3.16L9.37 -3.67L8.85 -4.16L8.28 -4.64L7.68 -5.09L7.04 -5.51L6.36 -5.91L5.66 -6.29L4.92 -6.63L4.17 -6.93L3.39 -7.21L2.59 -7.45L1.79 -7.65L0.97 -7.82M7.31 -9.51L6.74 -9.78L6.14 -10.00L5.51 -10.17L4.86 -10.29L4.18 -10.36L3.48 -10.38L2.76 -10.35L2.03 -10.27L1.29 -10.14L0.54 -9.95M0.36 -12.24L-0.08 -12.04L-0.52 -11.79L-0.96 -11.48L-1.39 -11.11M-4.08 -11.43L-4.09 -11.16L-4.09 -10.84M-7.61 -9.31L-7.28 -9.33L-6.92 -9.31L-6.52 -9.25M-10.69 -4.65L-10.32 -5.10L-9.90 -5.53L-9.43 -5.93L-8.92 -6.30L-8.36 -6.64L-7.76 -6.94M-10.60 4.94L-10.69 4.29L-10.73 3.62L-10.72 2.94L-10.65 2.23L-10.54 1.52L-10.37 0.80L-10.15 0.08L-9.89 -0.65L-9.57 -1.37L-9.21 -2.08L-8.80 -2.79L-8.35 -3.48L-7.86 -4.15L-7.33 -4.80M-3.47 11.79L-3.83 11.47L-4.17 11.11L-4.49 10.68L-4.79 10.21L-5.07 9.69L-5.32 9.11L-5.54 8.50L-5.74 7.84L-5.91 7.15L-6.05 6.42L-6.16 5.66L-6.25 4.87L-6.30 4.05L-6.32 3.22L-6.31 2.37L-6.27 1.51L-6.20 0.65L-6.10 -0.22L-5.96 -1.09L-5.80 -1.95L-5.62 -2.81L-5.40 -3.65M3.34 11.63L3.17 11.41L2.98 11.14L2.78 10.81L2.56 10.43L2.33 10.00L2.09 9.52L1.84 8.99L1.58 8.42L1.31 7.81L1.04 7.16L0.76 6.48L0.48 5.76L0.19 5.02L-0.09 4.25L-0.38 3.46L-0.66 2.66L-0.94 1.84L-1.22 1.01L-1.49 0.18L-1.75 -0.66L-2.00 -1.49L-2.25 -2.31L-2.48 -3.12L-2.70 -3.92"/></svg>
</div>
</body>
</html>
